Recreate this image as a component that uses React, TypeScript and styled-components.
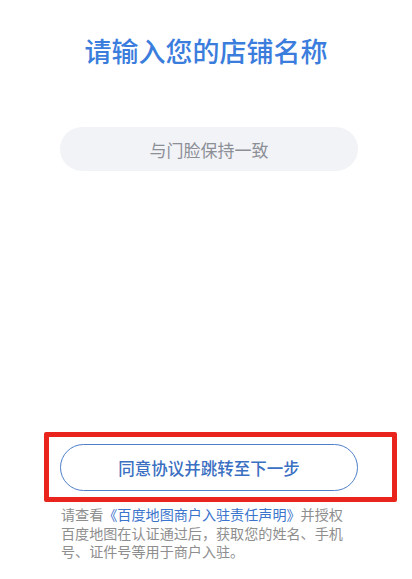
import styled, {createGlobalStyle} from 'styled-components'

const GlobalStyle = createGlobalStyle`
  html, body {
    margin: 0;
    padding: 0;
    background: #ffffff;
  }
  body {
    font-family: "Noto Sans CJK SC", "Noto Sans", sans-serif;
  }
`

const Page = styled.div`
  width: 412px;
  height: 579px;
  overflow: hidden;
  display: flex;
  flex-direction: column;
  background: #ffffff;
`

const Title = styled.h1`
  margin: 31px 0 0;
  height: 40px;
  line-height: 40px;
  text-align: center;
  font-size: 27px;
  font-weight: 500;
  color: #3b7ddd;
`

const NameInput = styled.input`
  margin: 56px 0 0 60px;
  width: 298px;
  height: 44px;
  box-sizing: border-box;
  border: none;
  outline: none;
  border-radius: 22px;
  background: #f2f3f7;
  text-align: center;
  font-family: inherit;
  font-size: 17px;
  color: #333;

  &::placeholder {
    color: #8c8f96;
  }
`

const Highlight = styled.div`
  margin: 261px 0 0 44px;
  width: 353px;
  box-sizing: border-box;
  border: 5px solid #e8241c;
  border-radius: 2px;
  padding: 7px 34px 6px 11px;
`

const NextButton = styled.button`
  width: 298px;
  height: 47px;
  box-sizing: border-box;
  border: 1.5px solid #4f7fc9;
  border-radius: 24px;
  background: #ffffff;
  font-family: inherit;
  font-size: 16.5px;
  font-weight: 500;
  color: #3a6fc2;
  cursor: pointer;
`

const Notice = styled.p`
  margin: 3px 0 0 61px;
  width: 284px;
  font-size: 14.1px;
  line-height: 18.5px;
  color: #8e8e8e;
`

const Link = styled.span`
  color: #3a74cc;
`

export default function App() {
    return (
        <>
            <GlobalStyle/>
            <Page>
                <Title>请输入您的店铺名称</Title>
                <NameInput placeholder="与门脸保持一致"/>
                <Highlight>
                    <NextButton>同意协议并跳转至下一步</NextButton>
                </Highlight>
                <Notice>
                    请查看<Link>《百度地图商户入驻责任声明》</Link>并授权百度地图在认证通过后，获取您的姓名、手机号、证件号等用于商户入驻。
                </Notice>
            </Page>
        </>
    )
}
